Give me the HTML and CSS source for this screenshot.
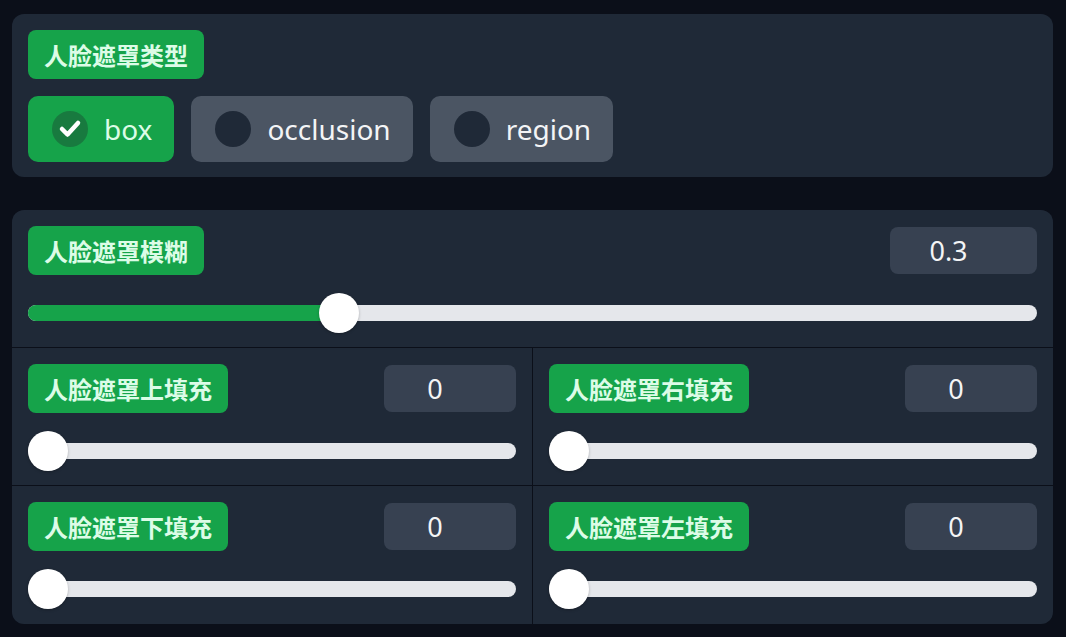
FILE: index.html
```html
<!DOCTYPE html>
<html lang="zh-CN">
<head>
	<meta charset="UTF-8">
	<title>人脸遮罩</title>
	<link rel="stylesheet" href="styles.css">
</head>
<body>
	<section class="block">
		<span class="tag">人脸遮罩类型</span>
		<div class="radios">
			<label class="radio checked">
				<span class="dot"><svg width="36" height="36" viewBox="0 0 36 36"><path d="M10 18 L15.5 23.5 L26 12" fill="none" stroke="#fff" stroke-width="4.5" stroke-linecap="round" stroke-linejoin="round"/></svg></span>
				box
			</label>
			<label class="radio"><span class="dot"></span>occlusion</label>
			<label class="radio"><span class="dot"></span>region</label>
		</div>
	</section>

	<section class="block grid">
		<div class="cell wide">
			<div class="head">
				<span class="tag">人脸遮罩模糊</span>
				<span class="num big">0.3</span>
			</div>
			<div class="slider">
				<div class="track"><div class="fill" style="width:calc(20px + 0.3 * (100% - 40px))"></div></div>
				<div class="thumb" style="left:calc(0.3 * (100% - 40px))"></div>
			</div>
		</div>
		<div class="cell">
			<div class="head">
				<span class="tag">人脸遮罩上填充</span>
				<span class="num">0</span>
			</div>
			<div class="slider">
				<div class="track"></div>
				<div class="thumb"></div>
			</div>
		</div>
		<div class="cell">
			<div class="head">
				<span class="tag">人脸遮罩右填充</span>
				<span class="num">0</span>
			</div>
			<div class="slider">
				<div class="track"></div>
				<div class="thumb"></div>
			</div>
		</div>
		<div class="cell">
			<div class="head">
				<span class="tag">人脸遮罩下填充</span>
				<span class="num">0</span>
			</div>
			<div class="slider">
				<div class="track"></div>
				<div class="thumb"></div>
			</div>
		</div>
		<div class="cell">
			<div class="head">
				<span class="tag">人脸遮罩左填充</span>
				<span class="num">0</span>
			</div>
			<div class="slider">
				<div class="track"></div>
				<div class="thumb"></div>
			</div>
		</div>
	</section>
</body>
</html>
```

FILE: styles.css
```css
* {margin:0; padding:0; box-sizing:border-box;}
body {background:#0b0f19; font-family:"Noto Sans","Open Sans","Noto Sans CJK SC",sans-serif; color:#f3f4f6; padding:14px 13px 0 12px;}
.block {background:#1f2937; border-radius:12px; padding:16px 16px 15px;}
.block + .block {margin-top:33px;}
.tag {display:inline-block; background:#16a34a; color:#dcfce7; font:700 24px/33px "Noto Sans CJK SC",sans-serif; padding:8px 16px; border-radius:8px;}
.radios {display:flex; gap:17px; margin-top:17px;}
.radio {display:flex; align-items:center; gap:16px; height:66px; padding:0 22px 0 24px; background:#4b5563; border-radius:10px; font-size:28px; color:#f3f4f6; cursor:pointer;}
.radio.checked {background:#16a34a; color:#dcfce7;}
.dot {width:36px; height:36px; border-radius:50%; background:#1f2937; display:block;}
.radio.checked .dot {background:#187a3f;}
.dot svg {display:block;}
.grid {display:grid; grid-template-columns:1fr 1fr; grid-template-rows:137px 137px 138px; gap:1px; padding:0; background:#0b0f19; overflow:hidden;}
.cell {background:#1f2937; padding:16px 16px 14px;}
.cell.wide {grid-column:1 / 3;}
.head {display:flex; justify-content:space-between; align-items:center; height:48px;}
.num {width:132px; height:47px; background:#374151; border-radius:8px; font-size:27px; line-height:47px; text-align:center; padding-right:30px; color:#f3f4f6;}
.num.big {width:147px;}
.slider {position:relative; height:40px; margin-top:19px; display:flex; align-items:center;}
.track {width:100%; height:16px; background:#e5e7eb; border-radius:8px; overflow:hidden;}
.fill {height:100%; background:#16a34a;}
.thumb {position:absolute; top:0; left:0; width:40px; height:40px; border-radius:50%; background:#fff; box-shadow:0 1px 3px rgba(0,0,0,.25);}
```
